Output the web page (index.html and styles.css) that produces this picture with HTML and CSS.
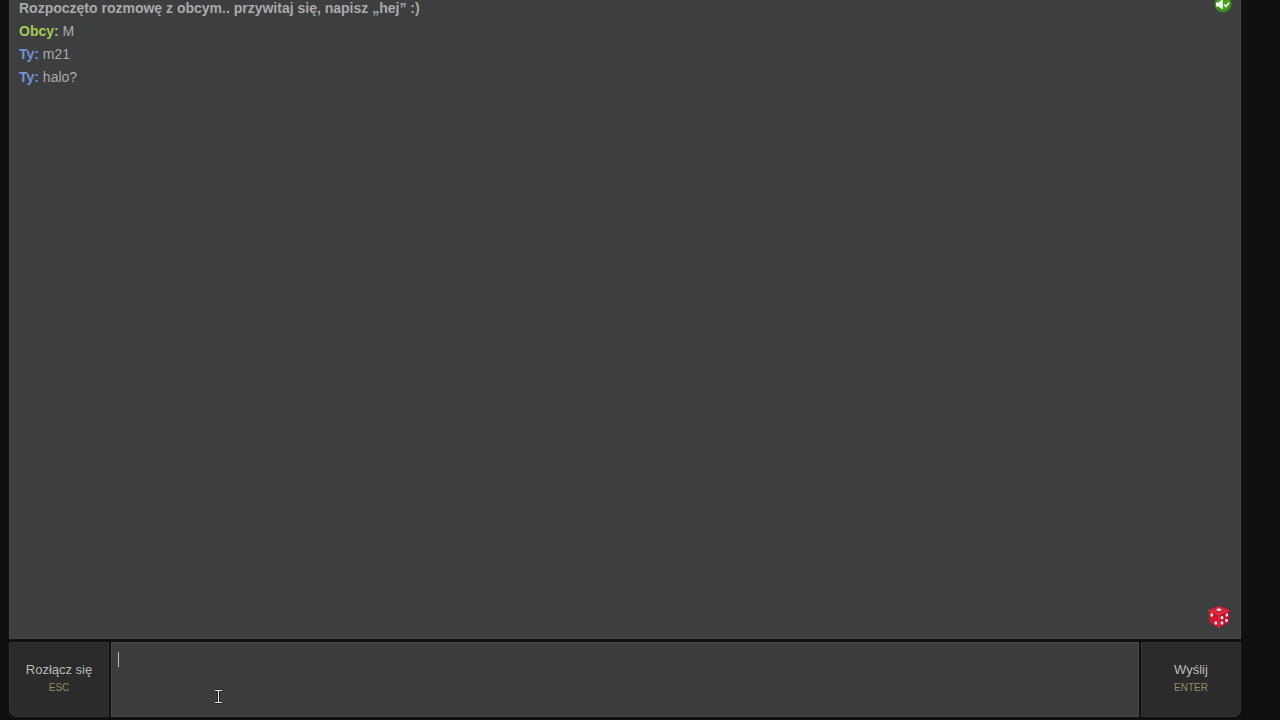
FILE: index.html
```html
<!DOCTYPE html>
<html lang="pl">
<head>
<meta charset="utf-8">
<meta name="viewport" content="width=device-width, initial-scale=1">
<title>Rozmowa z obcym</title>
<link rel="stylesheet" href="styles.css">
</head>
<body>
<main class="chat">
  <section class="log" aria-label="Rozmowa">
    <p class="message notice">Rozpoczęto rozmowę z obcym.. przywitaj się, napisz „hej” :)</p>
    <p class="message"><b class="stranger">Obcy:</b> M</p>
    <p class="message"><b class="you">Ty:</b> m21</p>
    <p class="message"><b class="you">Ty:</b> halo?</p>
    <button class="icon-button sound" type="button" aria-label="Dźwięk">
      <svg width="18" height="18" viewBox="0 0 18 18">
        <circle cx="9" cy="9" r="8.5" fill="#3f8f1c"/>
        <circle cx="9" cy="8" r="6.5" fill="#4ba022"/>
        <path d="M2 7.500h2.500L8.800 4v10.500L4.500 11.500H2z" fill="#f2f8ee"/>
        <path d="M10 9.500l2 2L15.200 7.500" fill="none" stroke="#f2f8ee" stroke-width="1.600"/>
      </svg>
    </button>
    <button class="icon-button dice" type="button" aria-label="Losuj pytanie">
      <svg width="24" height="24" viewBox="0 0 24 24">
        <path d="M12 1l10.500 4.200-1 12.300L12 23 2.500 17.500l-1-12.300z" fill="#c01029"/>
        <path d="M12 1l10.500 4.200L12 9.500 1.500 5.200z" fill="#d4233a"/>
        <path d="M1.500 5.200L12 9.500V23L2.500 17.500z" fill="#cb142e"/>
        <path d="M1.500 5.200L12 9.500l10.500-4.300M12 9.500V23" fill="none" stroke="#e8485b" stroke-width="0.800"/>
        <g fill="#fff0f0">
          <ellipse cx="12" cy="4.800" rx="2.400" ry="1.300"/>
          <ellipse cx="4.800" cy="10" rx="1.400" ry="1.700"/>
          <ellipse cx="8.800" cy="18" rx="1.400" ry="1.800"/>
          <ellipse cx="15" cy="12.800" rx="1.400" ry="1.700"/>
          <ellipse cx="19.800" cy="10" rx="1.300" ry="1.700"/>
          <ellipse cx="15" cy="18" rx="1.400" ry="1.700"/>
          <ellipse cx="19.500" cy="15.500" rx="1.300" ry="1.700"/>
        </g>
      </svg>
    </button>
  </section>
  <form class="composer">
    <button class="action leave" type="button">Rozłącz się<small class="key">ESC</small></button>
    <div class="field">
      <textarea class="input" aria-label="Wiadomość"></textarea>
      <span class="caret"></span>
      <svg class="pointer" width="9" height="15" viewBox="0 0 9 15" aria-hidden="true">
        <path d="M1 1.500h7M1 13.500h7M4.500 1v13" fill="none" stroke="#222" stroke-width="3"/>
        <path d="M1 1.500h7M1 13.500h7M4.500 2v11" fill="none" stroke="#eee" stroke-width="1"/>
      </svg>
    </div>
    <button class="action send" type="button">Wyślij<small class="key">ENTER</small></button>
  </form>
</main>
</body>
</html>
```
FILE: styles.css
```css
* { box-sizing: border-box; }

body {
  margin: 0;
  background: #101010;
  color: #aaa;
  font-family: "Liberation Sans", Arial, sans-serif;
  font-size: 14px;
}

.chat {
  display: flex;
  flex-direction: column;
  height: 100vh;
  padding: 0 39px 3px 9px;
  overflow: hidden;
}

.log {
  position: relative;
  flex: 1;
  margin-bottom: 3px;
  padding: 0 9px;
  background: #3d3e40;
  border: 1px solid #464648;
  border-top: 0;
}

.message {
  margin: 0 0 3px;
  line-height: 20px;
}

.notice {
  margin-top: -2px;
  font-weight: bold;
}

.stranger { color: #a5c955; }
.you { color: #7490d2; }

.icon-button {
  position: absolute;
  padding: 0;
  border: 0;
  background: none;
}

.icon-button svg { display: block; }

.sound {
  top: -5px;
  right: 8px;
}

.dice {
  right: 9px;
  bottom: 9px;
}

.composer {
  display: grid;
  grid-template-columns: 100px 1fr 100px;
  gap: 2px;
  height: 75px;
}

.action {
  display: flex;
  flex-direction: column;
  align-items: center;
  justify-content: center;
  padding: 0 0 2px;
  border: 1px solid #343434;
  background: #2b2b2b;
  color: #bbb;
  font: inherit;
  font-size: 13px;
  line-height: 18px;
}

.leave { border-bottom-left-radius: 7px; }
.send { border-bottom-right-radius: 7px; }

.key {
  color: #918b65;
  font-size: 10px;
}

.field { position: relative; }

.input {
  display: block;
  width: 100%;
  height: 100%;
  padding: 8px 6px;
  border: 1px solid #47494a;
  outline: 0;
  background: #3b3d3f;
  color: #bbb;
  font: inherit;
  resize: none;
}

.caret {
  position: absolute;
  top: 10px;
  left: 7px;
  width: 1px;
  height: 15px;
  background: #bbb;
}

.pointer {
  position: absolute;
  top: 47px;
  left: 103px;
}
```
